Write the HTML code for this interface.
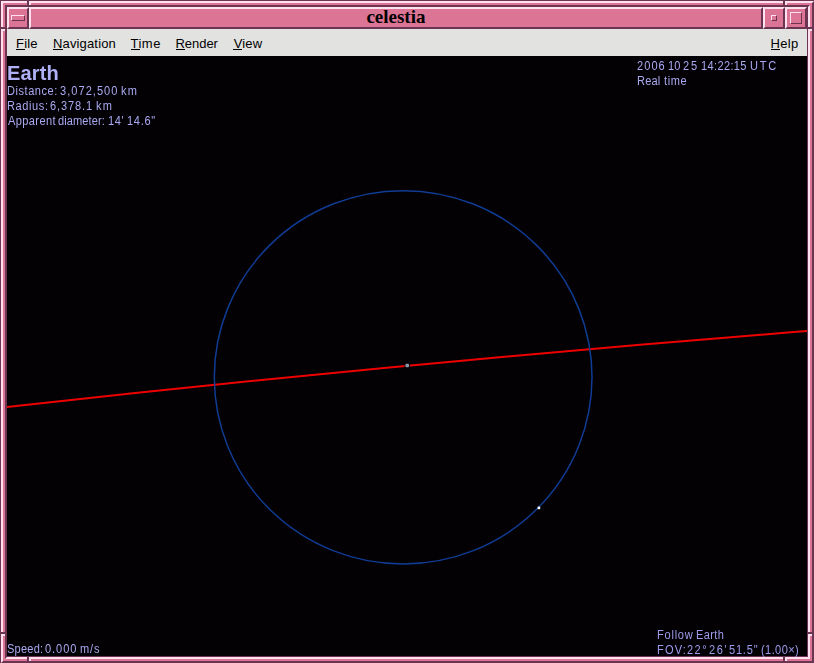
<!DOCTYPE html>
<html><head><meta charset="utf-8">
<style>
html,body{margin:0;padding:0;}
body{width:814px;height:663px;position:relative;overflow:hidden;background:#6b3551;font-family:"Liberation Sans",sans-serif;}
.a{position:absolute;box-sizing:border-box;}
.m{position:absolute;top:36px;font-size:13px;line-height:15px;color:#000;white-space:nowrap;}
.t{position:absolute;font-size:12px;line-height:14px;white-space:nowrap;color:#aaaaf2;transform:scaleX(0.92) translateZ(0);transform-origin:0 0;}
</style></head><body>
<div class="a" style="left:1px;top:1px;width:813px;height:662px;border-style:solid;border-width:2px;border-color:#ffe0ee #6b3551 #6b3551 #ffe0ee;background:#dc7496;"></div>
<div class="a" style="left:5px;top:5px;width:805px;height:654px;border-style:solid;border-width:2px;border-color:#6b3551 #ffe0ee #ffe0ee #6b3551;background:#6b3551;"></div>
<div class="a" style="left:27px;top:1px;width:2px;height:6px;background:#6b3551;"></div>
<div class="a" style="left:29px;top:1px;width:2px;height:4px;background:#ffe0ee;"></div>
<div class="a" style="left:783px;top:1px;width:2px;height:6px;background:#6b3551;"></div>
<div class="a" style="left:785px;top:1px;width:2px;height:4px;background:#ffe0ee;"></div>
<div class="a" style="left:27px;top:656px;width:2px;height:7px;background:#6b3551;"></div>
<div class="a" style="left:29px;top:657px;width:2px;height:4px;background:#ffe0ee;"></div>
<div class="a" style="left:783px;top:656px;width:2px;height:7px;background:#6b3551;"></div>
<div class="a" style="left:785px;top:657px;width:2px;height:4px;background:#ffe0ee;"></div>
<div class="a" style="left:1px;top:27px;width:6px;height:2px;background:#6b3551;"></div>
<div class="a" style="left:1px;top:29px;width:4px;height:2px;background:#ffe0ee;"></div>
<div class="a" style="left:1px;top:632px;width:6px;height:2px;background:#6b3551;"></div>
<div class="a" style="left:1px;top:634px;width:4px;height:2px;background:#ffe0ee;"></div>
<div class="a" style="left:807px;top:27px;width:7px;height:2px;background:#6b3551;"></div>
<div class="a" style="left:808px;top:29px;width:4px;height:2px;background:#ffe0ee;"></div>
<div class="a" style="left:807px;top:632px;width:7px;height:2px;background:#6b3551;"></div>
<div class="a" style="left:808px;top:634px;width:4px;height:2px;background:#ffe0ee;"></div>
<div class="a" style="left:7px;top:7px;width:22px;height:22px;border-style:solid;border-width:2px;border-color:#ffe0ee #6b3551 #6b3551 #ffe0ee;background:#dc7496;"></div>
<div class="a" style="left:11px;top:15px;width:14px;height:6px;border-style:solid;border-width:1px;border-color:#ffe0ee #6b3551 #6b3551 #ffe0ee;background:#dc7496;"></div>
<div class="a" style="left:29px;top:7px;width:734px;height:22px;border-style:solid;border-width:2px;border-color:#ffe0ee #6b3551 #6b3551 #ffe0ee;background:#dc7496;"></div>
<div class="a" style="left:366.4px;top:6px;font:bold 19px 'Liberation Serif',serif;line-height:22px;color:#000;white-space:nowrap;">celestia</div>
<div class="a" style="left:763px;top:7px;width:22px;height:22px;border-style:solid;border-width:2px;border-color:#ffe0ee #6b3551 #6b3551 #ffe0ee;background:#dc7496;"></div>
<div class="a" style="left:771px;top:15px;width:6px;height:6px;border-style:solid;border-width:1px;border-color:#ffe0ee #6b3551 #6b3551 #ffe0ee;background:#dc7496;"></div>
<div class="a" style="left:785px;top:7px;width:22px;height:22px;border-style:solid;border-width:2px;border-color:#ffe0ee #6b3551 #6b3551 #ffe0ee;background:#dc7496;"></div>
<div class="a" style="left:790px;top:12px;width:12px;height:12px;border-style:solid;border-width:1px;border-color:#ffe0ee #6b3551 #6b3551 #ffe0ee;background:#dc7496;"></div>
<div class="a" style="left:7px;top:29px;width:800px;height:27px;background:#e2e3e0;"></div>
<div class="m" style="left:16.1px;letter-spacing:0.12px;">File</div>
<div class="a" style="left:16px;top:49px;width:9px;height:1px;background:#000;"></div>
<div class="m" style="left:53.0px;letter-spacing:0.15px;">Navigation</div>
<div class="a" style="left:53px;top:49px;width:10px;height:1px;background:#000;"></div>
<div class="m" style="left:130.55px;letter-spacing:0.48px;">Time</div>
<div class="a" style="left:131px;top:49px;width:9px;height:1px;background:#000;"></div>
<div class="m" style="left:175.5px;letter-spacing:-0.05px;">Render</div>
<div class="a" style="left:176px;top:49px;width:9px;height:1px;background:#000;"></div>
<div class="m" style="left:233.65px;letter-spacing:0.17px;">View</div>
<div class="a" style="left:233px;top:49px;width:9px;height:1px;background:#000;"></div>
<div class="m" style="left:770.5px;letter-spacing:0.3px;">Help</div>
<div class="a" style="left:771px;top:49px;width:9px;height:1px;background:#000;"></div>
<div class="a" style="left:7px;top:56px;width:800px;height:600px;background:#040104;"></div>
<svg class="a" style="left:0;top:0" width="814" height="663" viewBox="0 0 814 663">
<path d="M7,407.0 Q407,362.5 807,331.1" fill="none" stroke="#ee0000" stroke-width="2"/>
<ellipse cx="403.15" cy="377.35" rx="188.85" ry="186.65" fill="none" stroke="#103c94" stroke-width="1.5"/>
<rect x="404.6" y="362.8" width="5.2" height="5.6" fill="#040104"/>
<rect x="405.4" y="363.8" width="3.6" height="3.4" rx="1" fill="#8898a8"/>
<rect x="537.6" y="506.6" width="2.6" height="2.6" fill="#ffffff"/>
</svg>
<div class="t" style="left:6.75px;top:63px;letter-spacing:0.13px;font-weight:bold;font-size:20px;line-height:20px;color:#b0b0f6;transform:none;will-change:transform;">Earth</div>
<div class="t" style="left:7.14px;top:84px;letter-spacing:0.585px;">Distance:</div>
<div class="t" style="left:60.23px;top:84px;letter-spacing:1.125px;">3,072,500</div>
<div class="t" style="left:121.33px;top:84px;letter-spacing:1.279px;">km</div>
<div class="t" style="left:7.14px;top:99px;letter-spacing:0.647px;">Radius:</div>
<div class="t" style="left:50.47px;top:99px;letter-spacing:0.952px;">6,378.1</div>
<div class="t" style="left:96.13px;top:99px;letter-spacing:1.228px;">km</div>
<div class="t" style="left:7.83px;top:114px;letter-spacing:0.432px;">Apparent</div>
<div class="t" style="left:57.57px;top:114px;letter-spacing:0.118px;">diameter:</div>
<div class="t" style="left:108.05px;top:114px;letter-spacing:0.728px;">14'</div>
<div class="t" style="left:126.5px;top:114px;letter-spacing:0.774px;">14.6"</div>
<div class="t" style="left:636.59px;top:59px;letter-spacing:1.148px;">2006</div>
<div class="t" style="left:667.96px;top:59px;letter-spacing:0.146px;">10</div>
<div class="t" style="left:683.49px;top:59px;letter-spacing:1.936px;">25</div>
<div class="t" style="left:701.2px;top:59px;letter-spacing:0.381px;">14:22:15</div>
<div class="t" style="left:750.26px;top:59px;letter-spacing:1.865px;">UTC</div>
<div class="t" style="left:637.04px;top:74px;letter-spacing:0.181px;">Real</div>
<div class="t" style="left:663.7px;top:74px;letter-spacing:0.635px;">time</div>
<div class="t" style="left:657.04px;top:628px;letter-spacing:0.831px;color:#9c9cec;">Follow</div>
<div class="t" style="left:696.14px;top:628px;letter-spacing:0.407px;color:#9c9cec;">Earth</div>
<div class="t" style="left:657.04px;top:643px;letter-spacing:1.266px;color:#9c9cec;">FOV:</div>
<div class="t" style="left:687.29px;top:643px;letter-spacing:1.565px;color:#9c9cec;">22°</div>
<div class="t" style="left:709.39px;top:643px;letter-spacing:1.736px;color:#9c9cec;">26'</div>
<div class="t" style="left:729.38px;top:643px;letter-spacing:0.855px;color:#9c9cec;">51.5"</div>
<div class="t" style="left:761.05px;top:643px;letter-spacing:0.449px;color:#9c9cec;">(1.00×)</div>
<div class="t" style="left:6.89px;top:642px;letter-spacing:0.252px;">Speed:</div>
<div class="t" style="left:45.41px;top:642px;letter-spacing:1.024px;">0.000</div>
<div class="t" style="left:80.12px;top:642px;letter-spacing:0.94px;">m/s</div>
</body></html>
